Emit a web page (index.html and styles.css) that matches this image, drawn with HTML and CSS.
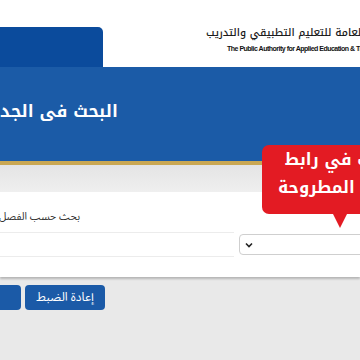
FILE: index.html
```html
<!DOCTYPE html>
<html lang="ar">
<head>
<meta charset="utf-8">
<link rel="stylesheet" href="styles.css">
</head>
<body>
<div class="page">
  <header class="top">
    <div class="tab"></div>
    <div class="logo">
      <div class="logo-ar">الهيئة العامة  للتعليم التطبيقي والتدريب</div>
      <div class="logo-en">The Public Authority for Applied Education &amp; Training</div>
    </div>
  </header>
  <section class="banner">
    <h1 class="title">البحث فى الجدول الدراسي</h1>
  </section>
  <div class="gold"></div>
  <div class="band"></div>
  <section class="card">
    <div class="fields">
      <div class="field field-left">
        <div class="label">بحث حسب الفصل الدراسي</div>
        <div class="input-faint"></div>
      </div>
      <div class="field field-right">
        <div class="select">
          <svg class="chev" width="8" height="6" viewBox="0 0 8 6"><path d="M1 1.5 L4 4.5 L7 1.5" fill="none" stroke="#222" stroke-width="1.6"/></svg>
        </div>
      </div>
    </div>
  </section>
  <div class="actions">
    <button class="btn btn-cut"></button>
    <button class="btn">إعادة الضبط</button>
  </div>
  <div class="tooltip">
    <span class="tip-line tip-1">ابحث في رابط</span>
    <span class="tip-line tip-2">الدورات المطروحة</span>
  </div>
</div>
</body>
</html>
```

FILE: styles.css
```css
html, body {
  margin: 0;
  padding: 0;
}
body {
  width: 360px;
  height: 360px;
  overflow: hidden;
  background: #e9e9e9;
  font-family: "Noto Sans Arabic", "DejaVu Sans", sans-serif;
}
.page {
  width: 360px;
  height: 360px;
  overflow: hidden;
  position: relative;
}
.top {
  height: 67px;
  background: #fff;
  display: flex;
  align-items: flex-end;
}
.tab {
  flex: none;
  width: 103px;
  height: 40px;
  background: #0b4b9c;
  border-top-right-radius: 5px;
}
.logo {
  flex: none;
  align-self: flex-start;
  margin-left: 103px;
  width: 240px;
  padding-top: 25px;
}
.logo-ar {
  direction: rtl;
  text-align: left;
  white-space: nowrap;
  font-family: "Noto Kufi Arabic", "Noto Sans Arabic", sans-serif;
  font-weight: 500;
  font-size: 10.5px;
  line-height: 15px;
  color: #1a1a1a;
}
.logo-en {
  white-space: nowrap;
  font-family: "Liberation Sans", sans-serif;
  font-weight: bold;
  font-size: 7px;
  line-height: 9px;
  letter-spacing: -0.5px;
  margin-left: 21px;
  margin-top: 4px;
  color: #111;
}
.banner {
  height: 94px;
  background: #1b5ba7;
  display: flex;
  align-items: flex-start;
}
.title {
  flex: none;
  width: 118px;
  margin: 29px 0 0 0;
  direction: rtl;
  white-space: nowrap;
  color: #fff;
  font-family: "Noto Kufi Arabic", "Noto Sans Arabic", sans-serif;
  font-size: 17px;
  font-weight: bold;
  line-height: 30px;
}
.gold {
  height: 4px;
  background: #c9a752;
}
.band {
  height: 27px;
  background: linear-gradient(#e4e4e4, #efefef);
}
.card {
  height: 85px;
  background: #fff;
  box-shadow: 0 2px 2px rgba(0, 0, 0, 0.22);
  position: relative;
}
.fields {
  display: flex;
  gap: 5px;
  padding-top: 17px;
}
.field-left {
  flex: none;
  width: 234px;
}
.label {
  width: 80px;
  direction: rtl;
  white-space: nowrap;
  font-size: 10.5px;
  line-height: 16px;
  color: #333;
}
.input-faint {
  margin-top: 7px;
  height: 23px;
  border-top: 1px solid #ececec;
  border-bottom: 1px solid #ececec;
}
.field-right {
  flex: none;
  width: 160px;
  padding-top: 25px;
}
.select {
  height: 19px;
  border: 1px solid #cfcfcf;
  border-radius: 4px;
  display: flex;
  align-items: center;
  padding-left: 5px;
}
.chev {
  display: block;
}
.actions {
  display: flex;
  gap: 4px;
  padding-top: 8px;
}
.btn {
  flex: none;
  height: 25px;
  width: 80px;
  border: none;
  border-radius: 4px;
  background: #1b5aa7;
  color: #fff;
  font-family: "Noto Sans Arabic", "DejaVu Sans", sans-serif;
  font-size: 12px;
  line-height: 25px;
  padding: 0;
  direction: rtl;
}
.btn-cut {
  width: 21px;
  border-radius: 0 4px 4px 0;
}
.tooltip {
  position: absolute;
  left: 262px;
  top: 145px;
  width: 200px;
  height: 69px;
  box-sizing: border-box;
  padding-top: 1px;
  background: #e31b23;
  border-radius: 7px;
}
.tooltip::after {
  content: "";
  position: absolute;
  left: 71px;
  top: 69px;
  border-left: 7px solid transparent;
  border-right: 7px solid transparent;
  border-top: 14px solid #e31b23;
}
.tip-line {
  display: block;
  direction: rtl;
  text-align: left;
  white-space: nowrap;
  color: #fff;
  font-family: "Noto Kufi Arabic", "Noto Sans Arabic", sans-serif;
  font-size: 16.5px;
  font-weight: bold;
  line-height: 28px;
}
.tip-1 {
  padding-left: 23px;
}
.tip-2 {
  padding-left: 16px;
}
```
